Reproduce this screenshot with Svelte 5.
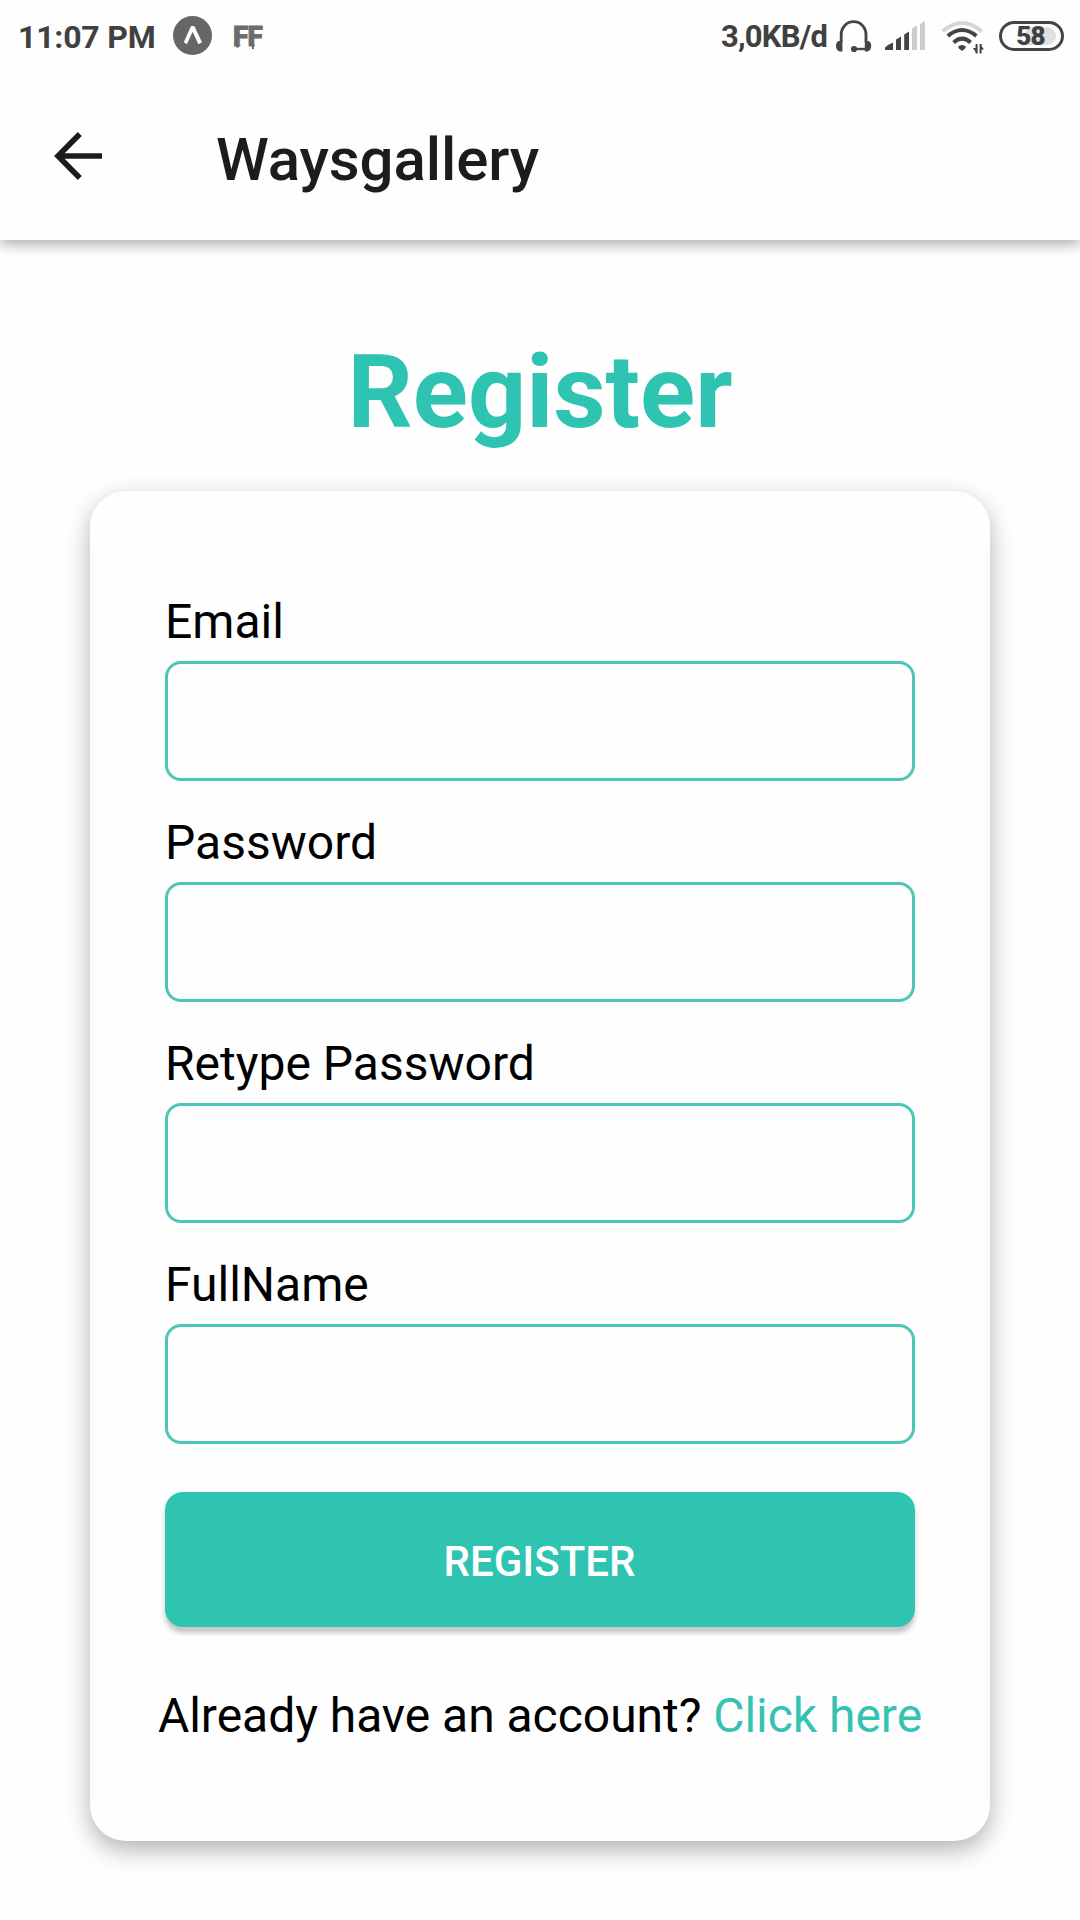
<script>
  const fields = [
    { id: 'email', label: 'Email', type: 'email' },
    { id: 'password', label: 'Password', type: 'password' },
    { id: 'retype', label: 'Retype Password', type: 'password' },
    { id: 'fullname', label: 'FullName', type: 'text' }
  ];
</script>

<div class="screen">
  <header>
    <div class="status">
      <span class="clock">11:07 PM</span>
      <svg class="expo" width="40" height="40" viewBox="0 0 40 40">
        <circle cx="19.5" cy="19.5" r="19.5" fill="#666" />
        <path d="M10.8 26.3 17.6 10.9Q18 10.1 18.8 10.1H20.6Q21.4 10.1 21.8 10.9L29 26.3 25.4 28.3 19.6 15.7 13.9 28.3Z" fill="#fff" />
      </svg>
      <span class="ff">FF
        <svg width="29" height="6" viewBox="0 0 29 6" fill="#6c6c6c"><path d="M.5 0h6v1H5v1.500H2V1H.5zM15.500 0h5.500v1h-1v3h-2V1h-2.500z" /></svg>
      </span>
      <span class="grow"></span>
      <span class="speed">3,0KB/d</span>
      <svg class="phones" width="37" height="36" viewBox="835 18 37 36" fill="none" stroke="#444" stroke-width="2.8">
        <path d="M841.2 42V34.5a12.4 12.8 0 0 1 24.8 0V42" />
        <path d="M839 41h3.4v10.6h-2.6q-3.8-1.2-3.8-5.5t3-5.1ZM868.2 41h-3.4v10.6h2.6q3.8-1.2 3.8-5.5t-3-5.1Z" fill="#444" stroke="none" />
        <path d="M854 49h13" stroke-width="2.4" />
        <circle cx="854" cy="49" r="3.1" fill="#444" stroke="none" />
      </svg>
      <svg class="signal" width="40" height="30" viewBox="885 21 40 30">
        <path d="M885 50v-2.5l3-2.500 5-2.500V50zM896 50V39.500l5-3V50zM904.200 50V34.500l4.800-3V50z" fill="#444" />
        <path d="M912 50V28.500l5-3V50zM920 50V24l5-3v29z" fill="#ccc" />
      </svg>
      <svg class="wifi" width="44" height="34" viewBox="940 20 44 34" fill="none">
        <path d="M942.5 31.5q19.5-17 39.5 0" stroke="#d6d6d6" stroke-width="4" />
        <path d="M947.8 36q14.2-12 28.6 0M953.6 42.5q8.6-7.6 17 0" stroke="#444" stroke-width="4" />
        <path d="M958 46.6q4-3 8 0l-1 2-3 2.4-3-2.4z" fill="#444" />
        <path d="M976.6 44V53.5M980.6 53.5V44" stroke="#444" stroke-width="2" />
        <path d="M972.8 48h4v5.5zM980 44v5.5h4z" fill="#444" />
      </svg>
      <span class="battery"><i></i><b>58</b></span>
    </div>
    <div class="bar">
      <svg class="back" width="48" height="48" viewBox="0 0 48 48" fill="none" stroke="#1c1c1e" stroke-width="5.6">
        <path d="M48 24H4M25.8 2 4 24l21.8 22" />
      </svg>
      <h2>Waysgallery</h2>
    </div>
  </header>

  <main>
    <h1>Register</h1>
    <form class="card">
      {#each fields as f (f.id)}
        <div class="field">
          <label for={f.id}>{f.label}</label>
          <input id={f.id} type={f.type} />
        </div>
      {/each}
      <button type="button">REGISTER</button>
      <p>Already have an account? <span class="link">Click here</span></p>
    </form>
  </main>
</div>

<style>
  :global(body) {
    margin: 0;
    background: #fefefe;
  }
  .screen {
    width: 1080px;
    height: 1920px;
    overflow: hidden;
    background: #fefefe;
    font-family: Roboto, sans-serif;
    color: #000;
  }
  header {
    height: 240px;
    background: #fefefe;
    box-shadow: 0 5px 12px rgba(0, 0, 0, 0.3);
  }
  .status {
    height: 72px;
    display: flex;
    align-items: flex-start;
    color: #404040;
    font-weight: 700;
  }
  .clock {
    width: 155px;
    padding-left: 18px;
    font-size: 32px;
    line-height: 38px;
    margin-top: 18px;
    letter-spacing: -0.2px;
    white-space: nowrap;
  }
  .expo {
    margin-top: 16px;
  }
  .ff {
    width: 32px;
    margin: 19px 0 0 20px;
    font-size: 28px;
    line-height: 35px;
    height: 35px;
    font-weight: 900;
    letter-spacing: -0.8px;
    color: #6c6c6c;
    -webkit-text-stroke: 0.8px #6c6c6c;
    position: relative;
  }
  .ff svg {
    position: absolute;
    left: 1px;
    top: 26px;
  }
  .grow {
    flex: 1;
  }
  .speed {
    width: 114px;
    font-size: 31px;
    line-height: 36px;
    margin-top: 19px;
    letter-spacing: -0.8px;
    white-space: nowrap;
  }
  .phones {
    margin-top: 18px;
  }
  .signal {
    margin: 21px 0 0 13px;
  }
  .wifi {
    margin: 20px 0 0 15px;
  }
  .battery {
    box-sizing: border-box;
    width: 65px;
    height: 30px;
    margin: 21px 16px 0 15px;
    border: 3px solid #444;
    border-radius: 15px;
    padding: 3px 5px;
    display: grid;
  }
  .battery i,
  .battery b {
    grid-area: 1 / 1;
  }
  .battery i {
    justify-self: end;
    width: 30px;
    height: 18px;
    border-radius: 0 9px 9px 0;
    background: #e0e0e0;
  }
  .battery b {
    padding-right: 2px;
    font-size: 26px;
    line-height: 18px;
    letter-spacing: -0.8px;
    text-align: center;
  }
  .bar {
    height: 168px;
    display: flex;
    align-items: center;
  }
  .back {
    margin: 0 0 0 54px;
  }
  h2 {
    margin: 7px 0 0 114px;
    font-size: 60px;
    line-height: 70px;
    font-weight: 500;
    letter-spacing: -0.1px;
    color: #1c1c1e;
  }
  main {
    padding: 92px 90px 0;
  }
  h1 {
    margin: 0 0 39px;
    font-size: 102px;
    line-height: 120px;
    font-weight: 700;
    text-align: center;
    color: #2fc4b2;
  }
  .card {
    box-sizing: border-box;
    height: 1350px;
    padding: 103px 75px 0;
    border-radius: 36px;
    background: #fefefe;
    box-shadow: 0 9px 24px rgba(0, 0, 0, 0.3);
  }
  .field + .field {
    margin-top: 34px;
  }
  label {
    display: block;
    height: 67px;
    font-size: 48px;
    line-height: 56px;
  }
  input {
    display: block;
    box-sizing: border-box;
    width: 750px;
    height: 120px;
    border: 3px solid #4cc6b7;
    border-radius: 16px;
    background: #fefefe;
    outline: none;
  }
  button {
    display: block;
    width: 750px;
    height: 135px;
    margin-top: 48px;
    padding: 5px 1px 0 0;
    border: 0;
    border-radius: 18px;
    background: #2fc4b2;
    color: #fff;
    font: 500 42px/50px Roboto, sans-serif;
    box-shadow: 0 6px 5px rgba(0, 0, 0, 0.22);
  }
  p {
    margin: 61px -20px 0;
    font-size: 48px;
    line-height: 56px;
    letter-spacing: -0.03px;
    text-align: center;
    white-space: nowrap;
  }
  .link {
    color: #36c2b1;
  }
</style>
